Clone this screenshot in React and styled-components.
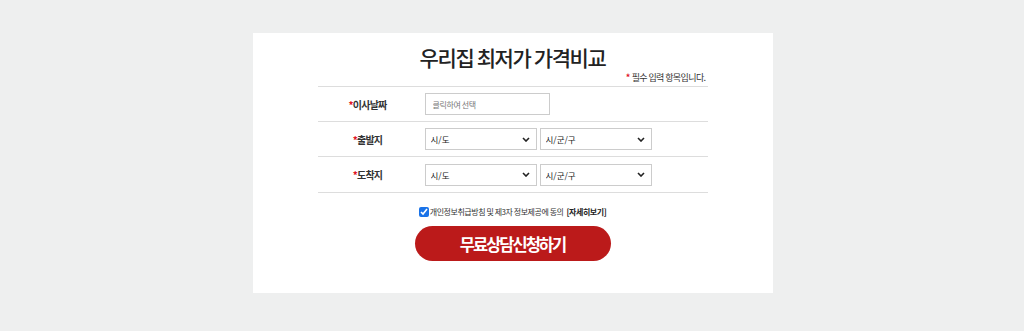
import styled, {createGlobalStyle} from "styled-components";

const GlobalStyle = createGlobalStyle`
    html, body {
        margin: 0;
        padding: 0;
        background: #eeefef;
    }
    body {
        font-family: "Noto Sans CJK KR", "Noto Sans", sans-serif;
        color: #222;
    }
`;

const chevron =
    "data:image/svg+xml;utf8," +
    encodeURIComponent(
        '<svg xmlns="http://www.w3.org/2000/svg" width="8" height="5" viewBox="0 0 8 5"><path d="M1 1l3 3 3-3" fill="none" stroke="#222" stroke-width="1.6"/></svg>'
    );

const Page = styled.div`
    display: flex;
    justify-content: center;
    padding: 33px 0 38px 1px;
`;

const Card = styled.div`
    width: 520px;
    height: 260px;
    background: #fff;
    display: flex;
    flex-direction: column;
    align-items: center;
    box-sizing: border-box;
    padding-top: 10px;
`;

const Title = styled.h2`
    margin: 0;
    font-size: 21px;
    font-weight: 500;
    letter-spacing: -1.4px;
    line-height: 28px;
    color: #222;
`;

const Form = styled.div`
    width: 390px;
`;

const Notice = styled.p`
    margin: 0;
    text-align: right;
    font-size: 9px;
    letter-spacing: -0.6px;
    line-height: 13px;
    color: #333;
    padding-right: 2px;
    padding-bottom: 2px;
`;

const Star = styled.span`
    color: #e0141e;
    font-weight: 700;
    margin-right: ${p => p.$gap || 0}px;
`;

const Table = styled.div`
    border-top: 1px solid #ddd;
`;

const Row = styled.div`
    display: flex;
    align-items: center;
    height: ${p => p.$h || 34}px;
    border-bottom: 1px solid #ddd;
`;

const Label = styled.div`
    width: 100px;
    text-align: center;
    font-size: 10px;
    font-weight: 700;
    letter-spacing: -0.8px;
    color: #333;
`;

const Fields = styled.div`
    display: flex;
    gap: 3px;
    padding-left: 7px;
`;

const DateInput = styled.input`
    width: 125px;
    height: 22px;
    box-sizing: border-box;
    border: 1px solid #ccc;
    padding: 0 7px;
    font-family: inherit;
    font-size: 8px;
    letter-spacing: -0.4px;
    outline: none;
    &::placeholder {
        color: #777;
    }
`;

const Select = styled.select`
    width: 112px;
    height: 22px;
    box-sizing: border-box;
    border: 1px solid #ccc;
    border-radius: 0;
    appearance: none;
    background: #fff url("${chevron}") no-repeat right 6px center;
    padding: 0 5px;
    font-family: inherit;
    font-size: 8.5px;
    color: #222;
`;

const Agree = styled.label`
    display: flex;
    align-items: center;
    justify-content: center;
    margin-top: 13px;
    font-size: 8px;
    letter-spacing: -0.45px;
    color: #333;
    input {
        width: 10px;
        height: 10px;
        margin: 0 1px 0 0;
        accent-color: #1a73e8;
    }
    b {
        font-weight: 700;
        color: #222;
        margin-left: 3px;
    }
`;

const SubmitButton = styled.button`
    display: block;
    margin: 9px auto 0;
    width: 196px;
    height: 35px;
    border: none;
    border-radius: 18px;
    background: #bb1a1a;
    color: #fff;
    font-family: inherit;
    font-size: 16.5px;
    font-weight: 700;
    letter-spacing: -2px;
    cursor: pointer;
`;

const regions = ["시/도"];
const cities = ["시/군/구"];

const PlaceSelects = () => (
    <Fields>
        <Select>
            {regions.map(r => (
                <option key={r}>{r}</option>
            ))}
        </Select>
        <Select>
            {cities.map(c => (
                <option key={c}>{c}</option>
            ))}
        </Select>
    </Fields>
);

const App = () => {
    return (
        <>
            <GlobalStyle />
            <Page>
                <Card>
                    <Title>우리집 최저가 가격비교</Title>
                    <Form>
                        <Notice>
                            <Star $gap={2}>*</Star>필수 입력 항목입니다.
                        </Notice>
                        <Table>
                            <Row>
                                <Label>
                                    <Star>*</Star>이사날짜
                                </Label>
                                <Fields>
                                    <DateInput placeholder="클릭하여 선택" readOnly />
                                </Fields>
                            </Row>
                            <Row>
                                <Label>
                                    <Star>*</Star>출발지
                                </Label>
                                <PlaceSelects />
                            </Row>
                            <Row $h={35}>
                                <Label>
                                    <Star>*</Star>도착지
                                </Label>
                                <PlaceSelects />
                            </Row>
                        </Table>
                        <Agree>
                            <input type="checkbox" defaultChecked />
                            개인정보취급방침 및 제3자 정보제공에 동의<b>[자세히보기]</b>
                        </Agree>
                        <SubmitButton>무료상담신청하기</SubmitButton>
                    </Form>
                </Card>
            </Page>
        </>
    );
};

export default App;
